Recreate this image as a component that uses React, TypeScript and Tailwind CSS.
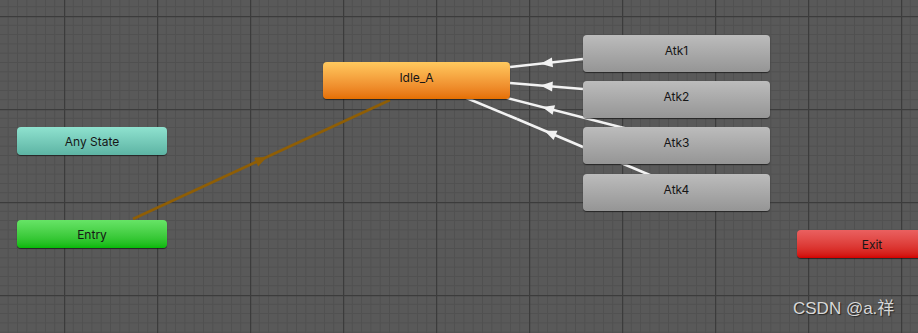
import React from "react";

type NodeProps = {
  label: string;
  left: number;
  top: number;
  w: number;
  h: number;
  cls: string;
  textCls?: string;
};

function Node({ label, left, top, w, h, cls, textCls = "" }: NodeProps) {
  return (
    <div
      className={`absolute flex items-center justify-center rounded-[4px] shadow-[0_1px_1px_rgba(0,0,0,0.55)] ${cls}`}
      style={{ left, top, width: w, height: h }}
    >
      <span className={`text-[12px] leading-none text-[#161616] font-['Inter',sans-serif] ${textCls}`}>{label}</span>
    </div>
  );
}

function Arrow({ x1, y1, x2, y2, color }: { x1: number; y1: number; x2: number; y2: number; color: string }) {
  const mx = (x1 + x2) / 2;
  const my = (y1 + y2) / 2;
  const ang = (Math.atan2(y2 - y1, x2 - x1) * 180) / Math.PI;
  return (
    <g>
      <line x1={x1} y1={y1} x2={x2} y2={y2} stroke={color} strokeWidth={2.6} />
      <polygon points="6,0 -6,-5 -6,5" fill={color} transform={`translate(${mx} ${my}) rotate(${ang})`} />
    </g>
  );
}

export default function App() {
  const minor = Array.from({ length: 9 }, (_, i) => (i + 1) * 9.3);
  return (
    <div className="relative w-[918px] h-[333px] overflow-hidden bg-[#595959]">
      <svg className="absolute inset-0" width={918} height={333}>
        <defs>
          <pattern id="grid" x={64} y={16} width={93} height={93} patternUnits="userSpaceOnUse">
            {minor.map((m) => (
              <g key={m}>
                <line x1={m} y1={0} x2={m} y2={93} stroke="#505050" strokeWidth={1} />
                <line x1={0} y1={m} x2={93} y2={m} stroke="#505050" strokeWidth={1} />
              </g>
            ))}
            <line x1={0.5} y1={0} x2={0.5} y2={93} stroke="#3c3c3c" strokeWidth={1.5} />
            <line x1={0} y1={0.5} x2={93} y2={0.5} stroke="#3c3c3c" strokeWidth={1.5} />
          </pattern>
        </defs>
        <rect x={0} y={0} width={918} height={333} fill="url(#grid)" />
        <Arrow x1={133} y1={219} x2={390} y2={100} color="#8f5e05" />
        <Arrow x1={583} y1={59} x2={510} y2={67} color="#f2f2f2" />
        <Arrow x1={583} y1={89} x2={510} y2={83} color="#f2f2f2" />
        <line x1={676} y1={141} x2={620} y2={127} stroke="#f2f2f2" strokeWidth={2.6} />
        <Arrow x1={620} y1={127} x2={476} y2={90} color="#f2f2f2" />
        <line x1={676} y1={186} x2={583} y2={147} stroke="#f2f2f2" strokeWidth={2.6} />
        <Arrow x1={583} y1={147} x2={517} y2={119} color="#f2f2f2" />
        <line x1={517} y1={119} x2={440} y2={87} stroke="#f2f2f2" strokeWidth={2.6} />
      </svg>

      <Node label="Any State" left={17} top={127} w={150} h={28} cls="bg-gradient-to-b from-[#8fe2cf] to-[#5db4a4]" textCls="mt-[1px]" />
      <Node label="Entry" left={17} top={220} w={150} h={28} cls="bg-gradient-to-b from-[#66e466] to-[#05b905]" textCls="mt-[1px]" />
      <Node label="Idle_A" left={323} top={62} w={187} h={37} cls="bg-gradient-to-b from-[#ffc95e] to-[#e56f00]" textCls="-mt-[5px]" />
      <Node label="Atk1" left={583} top={35} w={187} h={37} cls="bg-gradient-to-b from-[#bcbcbc] to-[#959595]" textCls="-mt-[5px]" />
      <Node label="Atk2" left={583} top={81} w={187} h={37} cls="bg-gradient-to-b from-[#bcbcbc] to-[#959595]" textCls="-mt-[5px]" />
      <Node label="Atk3" left={583} top={127} w={187} h={37} cls="bg-gradient-to-b from-[#bcbcbc] to-[#959595]" textCls="-mt-[5px]" />
      <Node label="Atk4" left={583} top={174} w={187} h={37} cls="bg-gradient-to-b from-[#bcbcbc] to-[#959595]" textCls="-mt-[5px]" />
      <Node label="Exit" left={797} top={230} w={150} h={28} cls="bg-gradient-to-b from-[#ea6060] to-[#d20000]" textCls="mt-[1px]" />

      <div className="absolute left-[793px] top-[300px] text-[17px] leading-none text-[#d8d8d8] font-['Liberation_Sans','Noto_Sans_CJK_SC',sans-serif] [text-shadow:1px_1px_1px_rgba(0,0,0,0.6)]">
        CSDN @a.祥
      </div>
    </div>
  );
}
